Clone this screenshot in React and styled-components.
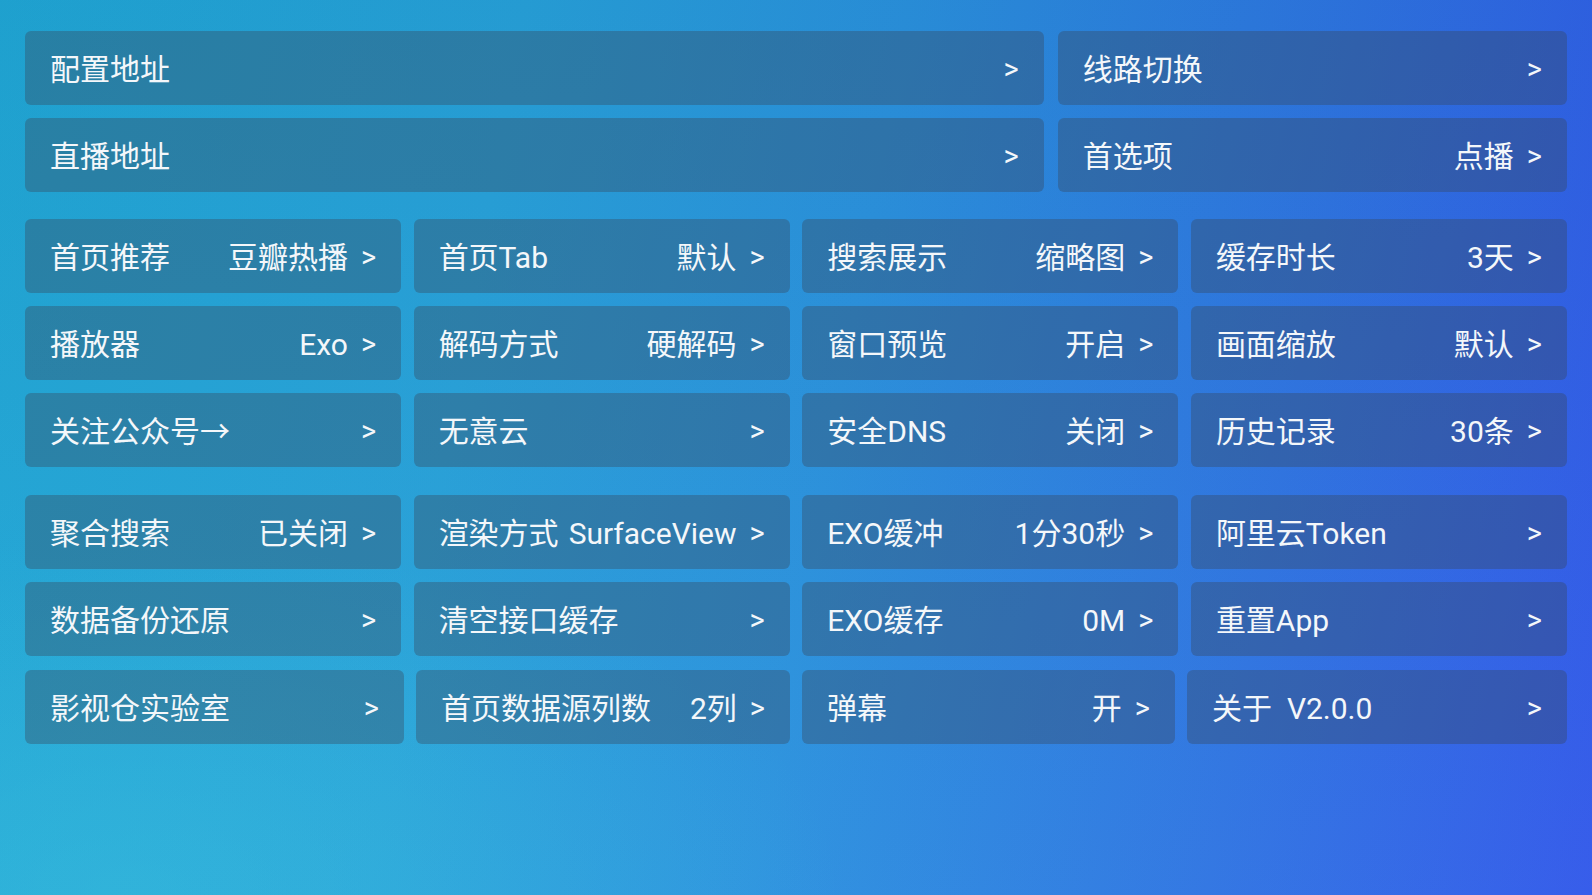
import React from 'react';
import styled, { createGlobalStyle } from 'styled-components';

const GlobalStyle = createGlobalStyle`
  html, body {
    margin: 0;
    padding: 0;
  }
  body {
    font-family: Roboto, "Noto Sans CJK SC", sans-serif;
  }
`;

const Page = styled.main`
  box-sizing: border-box;
  min-height: 100vh;
  padding: 31px 25px 40px;
  display: flex;
  flex-direction: column;
  background:
    radial-gradient(ellipse 45% 40% at 8% 100%, rgba(60, 200, 220, 0.35), rgba(60, 200, 220, 0)),
    linear-gradient(to bottom, rgba(0, 20, 60, 0.05), rgba(255, 255, 255, 0.03)),
    linear-gradient(100deg, #20a8d6 0%, #27a2da 30%, #2a92de 52%, #2e74e2 78%, #3158ea 100%);
`;

const Group = styled.section`
  display: flex;
  flex-direction: column;
  gap: ${({ $gap }) => $gap || 13}px;
  margin-top: ${({ $top }) => $top || 0}px;
`;

const Row = styled.div`
  display: grid;
  grid-template-columns: ${({ $cols }) => $cols};
  grid-auto-rows: 74px;
  column-gap: ${({ $gap }) => $gap || 12.5}px;
  row-gap: 13px;
`;

const Card = styled.div`
  box-sizing: border-box;
  display: flex;
  align-items: center;
  justify-content: space-between;
  padding: 3px 25px 0;
  border-radius: 6px;
  background: rgba(55, 70, 88, 0.36);
  color: #f4f7fa;
  font-size: 30px;
  line-height: 1;
  white-space: pre;
`;

const Label = styled.span``;

const Value = styled.span`
  display: flex;
  align-items: center;
  gap: 13px;
`;

const Arrow = styled.span`
  font-family: Roboto, sans-serif;
  font-size: 29px;
`;

const Item = ({ label, value }) => (
  <Card>
    <Label>{label}</Label>
    <Value>
      {value && <span>{value}</span>}
      <Arrow>&gt;</Arrow>
    </Value>
  </Card>
);

const top = [
  { label: '配置地址' },
  { label: '线路切换' },
  { label: '直播地址' },
  { label: '首选项', value: '点播' },
];

const middle = [
  { label: '首页推荐', value: '豆瓣热播' },
  { label: '首页Tab', value: '默认' },
  { label: '搜索展示', value: '缩略图' },
  { label: '缓存时长', value: '3天' },
  { label: '播放器', value: 'Exo' },
  { label: '解码方式', value: '硬解码' },
  { label: '窗口预览', value: '开启' },
  { label: '画面缩放', value: '默认' },
  { label: '关注公众号→' },
  { label: '无意云' },
  { label: '安全DNS', value: '关闭' },
  { label: '历史记录', value: '30条' },
];

const bottom = [
  { label: '聚合搜索', value: '已关闭' },
  { label: '渲染方式', value: 'SurfaceView' },
  { label: 'EXO缓冲', value: '1分30秒' },
  { label: '阿里云Token' },
  { label: '数据备份还原' },
  { label: '清空接口缓存' },
  { label: 'EXO缓存', value: '0M' },
  { label: '重置App' },
];

const last = [
  { label: '影视仓实验室' },
  { label: '首页数据源列数', value: '2列' },
  { label: '弹幕', value: '开' },
  { label: '关于  V2.0.0' },
];

const renderItems = (items) =>
  items.map((item) => <Item key={item.label} {...item} />);

const App = () => (
  <>
    <GlobalStyle />
    <Page>
      <Group>
        <Row $cols="2fr 1fr" $gap={14}>
          {renderItems(top)}
        </Row>
      </Group>
      <Group $top={27}>
        <Row $cols="repeat(4, 1fr)">{renderItems(middle)}</Row>
      </Group>
      <Group $top={28} $gap={14}>
        <Row $cols="repeat(4, 1fr)">{renderItems(bottom)}</Row>
        <Row $cols="379px 374px 373px 1fr" $gap={12}>
          {renderItems(last)}
        </Row>
      </Group>
    </Page>
  </>
);

export default App;
